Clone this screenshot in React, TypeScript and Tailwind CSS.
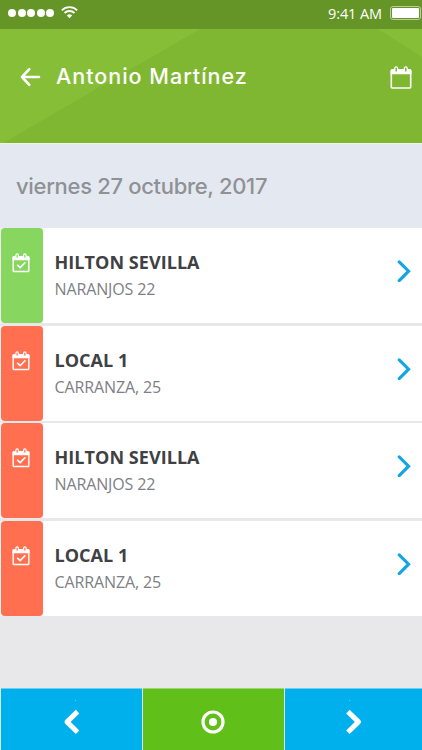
import React from 'react';

interface Visit {
  id: number;
  name: string;
  address: string;
  done: boolean;
}

const visits: Visit[] = [
  { id: 1, name: 'HILTON SEVILLA', address: 'NARANJOS 22', done: true },
  { id: 2, name: 'LOCAL 1', address: 'CARRANZA, 25', done: false },
  { id: 3, name: 'HILTON SEVILLA', address: 'NARANJOS 22', done: false },
  { id: 4, name: 'LOCAL 1', address: 'CARRANZA, 25', done: false },
];

const WifiIcon = () => (
  <svg width="17" height="13" viewBox="0 0 17 13" fill="none" stroke="currentColor" strokeWidth="1.8">
    <path d="M0.8 4.3a11 11 0 0 1 15.4 0" />
    <path d="M3.5 7a7.2 7.2 0 0 1 10 0" />
    <path d="M8.5 12.2 5.8 9.5a3.9 3.9 0 0 1 5.4 0z" fill="currentColor" stroke="none" />
  </svg>
);

const BackIcon = () => (
  <svg width="21" height="20" viewBox="0 0 21 20" fill="none" stroke="currentColor" strokeWidth="2.6" strokeLinecap="round" strokeLinejoin="round">
    <path d="M19 10H2M9.3 2.2 2 10l7.3 7.8" />
  </svg>
);

const CalendarIcon = () => (
  <svg width="22" height="23" viewBox="0 0 22 23" fill="none">
    <path d="M2 3.2h18a1.4 1.4 0 0 1 1.4 1.4v3.6H.6V4.6A1.4 1.4 0 0 1 2 3.2z" fill="#fff" />
    <rect x="1.3" y="4" width="19.4" height="18" rx="1" stroke="#fff" strokeWidth="1.6" />
    <rect x="4.8" y="0.8" width="2.8" height="5.6" rx="1.4" fill="#7fb733" stroke="#fff" strokeWidth="1.3" />
    <rect x="14.4" y="0.8" width="2.8" height="5.6" rx="1.4" fill="#7fb733" stroke="#fff" strokeWidth="1.3" />
  </svg>
);

const CalendarCheckIcon = ({ background }: { background: string }) => (
  <svg width="18" height="20" viewBox="0 0 18 20" fill="none">
    <path d="M1.4 3.3h15.2a.9.9 0 0 1 .9.9v3H.5v-3a.9.9 0 0 1 .9-.9z" fill="#fff" />
    <rect x="1.2" y="3.9" width="15.6" height="14.6" rx="0.8" stroke="#fff" strokeWidth="1.4" />
    <rect x="3.9" y="0.9" width="2.5" height="4.4" rx="1.25" fill={background} stroke="#fff" strokeWidth="1.2" />
    <rect x="11.6" y="0.9" width="2.5" height="4.4" rx="1.25" fill={background} stroke="#fff" strokeWidth="1.2" />
    <path d="m5.2 11.8 3 2.8 5.2-5.3" stroke="#fff" strokeWidth="1.6" />
  </svg>
);

const RowChevron = () => (
  <svg width="14" height="22" viewBox="0 0 14 22" fill="none" stroke="#12a6e4" strokeWidth="3.1" strokeLinecap="round">
    <path d="m2.2 1.8 9.4 9.4-9.4 9.4" />
  </svg>
);

const StatusBar = () => (
  <div className="h-[29px] flex items-center bg-[#659427] text-white pl-2 pr-px pb-[3px]">
    <div className="flex gap-[1.6px]">
      {[0, 1, 2, 3, 4].map(dot => (
        <span key={dot} className="w-[8px] h-[8px] rounded-full bg-white" />
      ))}
    </div>
    <span className="ml-[7px] -mt-px">
      <WifiIcon />
    </span>
    <span className="ml-auto font-['Open_Sans',sans-serif] text-[14.5px] leading-none tracking-[-0.1px] pt-[2px]">
      9:41 AM
    </span>
    <span className="ml-[8px] w-[31px] h-[14px] rounded-[3px] border border-[#b9cd9e] p-px">
      <span className="block h-full rounded-[1px] bg-white" />
    </span>
  </div>
);

const Header = () => (
  <header className="relative h-[114px] bg-[#7fb733] text-white">
    <svg className="absolute inset-0" width="422" height="114" viewBox="0 0 422 114">
      <path d="M0 0h200L3 114H0z" fill="#87be37" />
      <path d="M378 0h44v28z" fill="#87be37" />
    </svg>
    <div className="relative h-full flex items-center pl-5 pr-[10px] pb-[18px]">
      <BackIcon />
      <h1 className="ml-[15px] font-['Inter',sans-serif] font-medium text-[21.5px] leading-none tracking-[1px] whitespace-nowrap">
        Antonio Martínez
      </h1>
      <span className="ml-auto">
        <CalendarIcon />
      </span>
    </div>
  </header>
);

const VisitRow: React.FC<{ visit: Visit }> = ({ visit }) => (
  <li className="h-[95px] flex bg-white">
    <div className="pl-px bg-[#f4f4f6]">
      <div
        className={`w-[42px] h-full rounded-[4px] flex pl-[11px] pt-[25px] ${
          visit.done ? 'bg-[#86d660]' : 'bg-[#ff6f50]'
        }`}
      >
        <CalendarCheckIcon background={visit.done ? '#86d660' : '#ff6f50'} />
      </div>
    </div>
    <div className="flex-1 pl-[11.5px] pt-[22px] font-['Open_Sans',sans-serif] whitespace-nowrap">
      <p className="text-[18px] leading-6 font-bold tracking-[0.05px] text-[#3f4144]">{visit.name}</p>
      <p className="mt-[3px] text-[16px] leading-6 tracking-[-0.12px] text-[#7d8085]">{visit.address}</p>
    </div>
    <div className="pt-[32px] pr-[11px]">
      <RowChevron />
    </div>
  </li>
);

const Footer = () => (
  <nav className="h-[62px] flex gap-[1.5px] bg-[#d9eee6] pl-px">
    <button className="relative w-[140.5px] flex justify-center pl-px pt-[20px] bg-[#00b0ec] border-t border-[#6fcdf0]">
      <span className="absolute left-[74px] top-[11px] w-px h-px bg-[#5fd0f5]" />
      <svg width="18" height="26" viewBox="0 0 18 26" fill="none" stroke="#fff" strokeWidth="5" strokeLinejoin="round">
        <path d="M14.6 2.6 4 12.9l10.6 10.3" />
      </svg>
    </button>
    <button className="w-[140.5px] flex justify-center pt-[21px] bg-[#60bf19] border-t border-[#a0d67c]">
      <svg width="24" height="24" viewBox="0 0 24 24" fill="none">
        <circle cx="12" cy="12" r="10" stroke="#fff" strokeWidth="3.2" />
        <circle cx="12" cy="12" r="4" fill="#fff" />
      </svg>
    </button>
    <button className="relative flex-1 flex justify-center pt-[20px] bg-[#00b0ec] border-t border-[#6fcdf0]">
      <span className="absolute left-[64px] top-[11px] w-px h-px bg-[#5fd0f5]" />
      <svg width="18" height="26" viewBox="0 0 18 26" fill="none" stroke="#fff" strokeWidth="5" strokeLinejoin="round">
        <path d="m2.9 2.6 10.6 10.3L2.9 23.2" />
      </svg>
    </button>
  </nav>
);

const App: React.FC = () => {
  return (
    <div className="w-[422px] h-[750px] flex flex-col overflow-hidden bg-[#e8e8ea]">
      <StatusBar />
      <Header />
      <div className="h-[85px] flex items-center pl-[16px] bg-[#e4e9f1] border-t border-[#eef2e6]">
        <h2 className="font-['Inter',sans-serif] font-[450] text-[22px] leading-none tracking-[-0.32px] text-[#8f9195] whitespace-nowrap">
          viernes 27 octubre, 2017
        </h2>
      </div>
      <ul className="flex-1 flex flex-col gap-[2.6px]">
        {visits.map(visit => (
          <VisitRow key={visit.id} visit={visit} />
        ))}
      </ul>
      <Footer />
    </div>
  );
};

export default App;
